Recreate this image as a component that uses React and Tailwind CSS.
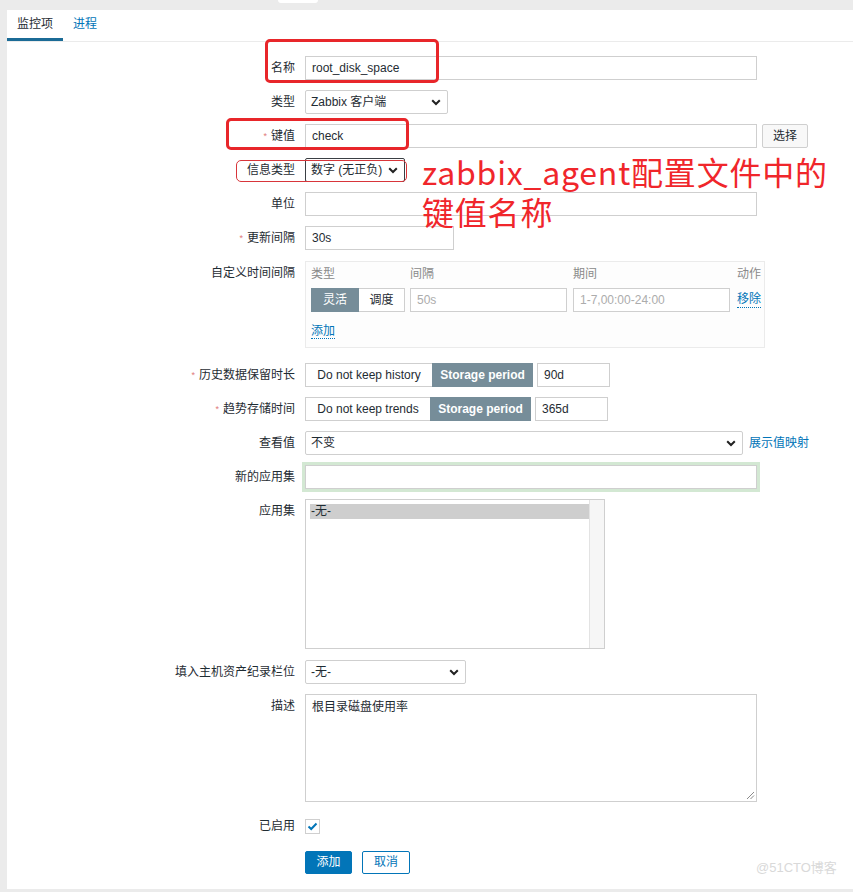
import React from 'react';

const FONT = "font-['Liberation_Sans','Noto_Sans_CJK_SC',sans-serif]";

function Chevron() {
  return (
    <svg width="10" height="7" viewBox="0 0 10 7" className="shrink-0">
      <path d="M1.2 1.2 L5 5 L8.8 1.2" fill="none" stroke="#222" strokeWidth="2" />
    </svg>
  );
}

const Label = ({ children, req }) => (
  <div className="w-[298px] shrink-0 pr-[10px] text-right leading-[24px] text-[#1f2c33]">
    {req && <span className="mr-[4px] align-top text-[9px] text-[#e07a7a]">*</span>}
    {children}
  </div>
);

const Input = ({ w, value, placeholder }) => (
  <div className={`h-[24px] whitespace-nowrap border border-[#cfcfcf] bg-white px-[6px] leading-[22px] ${w}`}>
    {value ? <span className="text-[#1f2c33]">{value}</span> : <span className="text-[#acacac]">{placeholder}</span>}
  </div>
);

const Select = ({ w, value, dark }) => (
  <div
    className={`flex h-[24px] items-center justify-between rounded-[2px] border bg-white pl-[5px] pr-[6px] ${w} ${
      dark ? 'border-[#3a3f44]' : 'border-[#cfcfcf]'
    }`}
  >
    <span className="text-[#1f2c33]">{value}</span>
    <Chevron />
  </div>
);

const Row = ({ label, req, className = '', children }) => (
  <div className={`flex items-start ${className}`}>
    <Label req={req}>{label}</Label>
    <div className="flex items-start">{children}</div>
  </div>
);

const Segmented = ({ left, right, lw, rw }) => (
  <div className="flex h-[24px] whitespace-nowrap">
    <div className={`border border-r-0 border-[#cfcfcf] bg-white text-center leading-[22px] text-[#1f2c33] ${lw}`}>{left}</div>
    <div className={`border border-[#768d99] bg-[#768d99] text-center font-bold leading-[22px] text-white ${rw}`}>{right}</div>
  </div>
);

export default function App() {
  return (
    <div className={`relative h-[892px] w-[853px] overflow-hidden bg-[#ebebeb] pl-[7px] pt-[10px] text-[12px] ${FONT}`}>
      {/* tiny tab at the very top */}
      <div className="absolute left-[278px] top-0 h-[3px] w-[40px] rounded-b-[3px] bg-white" />

      <div className="h-[879px] bg-white">
        {/* Tabs */}
        <div className="flex border-b border-[#ebebeb]">
          <div className="border-b-[3px] border-[#1b6b96] px-[10px] pt-[6px] pb-[6px] leading-[16px] text-[#1f2c33]">监控项</div>
          <div className="px-[10px] pt-[6px] leading-[16px] text-[#0275b8]">进程</div>
        </div>

        {/* Form */}
        <div className="flex flex-col gap-[10px] pt-[14px]">
          <Row label="名称">
            <Input w="w-[452px]" value="root_disk_space" />
          </Row>
          <Row label="类型">
            <Select w="w-[143px]" value="Zabbix 客户端" />
          </Row>
          <Row label="键值" req>
            <Input w="w-[452px]" value="check" />
            <div className="ml-[5px] h-[24px] w-[46px] rounded-[2px] border border-[#cfcfcf] bg-[#f8f8f8] text-center leading-[22px] text-[#1f2c33]">选择</div>
          </Row>
          <Row label="信息类型">
            <Select w="w-[100px]" value="数字 (无正负)" dark />
          </Row>
          <Row label="单位">
            <Input w="w-[452px]" value="" />
          </Row>
          <Row label="更新间隔" req>
            <Input w="w-[149px]" value="30s" />
          </Row>
          <Row label="自定义时间间隔" className="mt-[1px]">
            <div className="h-[87px] w-[460px] overflow-hidden whitespace-nowrap border border-[#ebebeb] bg-[#fdfdfd] pl-[5px] pt-[4px]">
              <div className="flex leading-[16px] text-[#8a8a8a]">
                <div className="w-[99px] shrink-0">类型</div>
                <div className="w-[163px] shrink-0">间隔</div>
                <div className="w-[164px] shrink-0">期间</div>
                <div className="shrink-0">动作</div>
              </div>
              <div className="mt-[6px] flex items-center">
                <div className="flex h-[24px] shrink-0">
                  <div className="w-[48px] border border-[#768d99] bg-[#768d99] text-center leading-[22px] text-white">灵活</div>
                  <div className="w-[46px] border border-l-0 border-[#cfcfcf] bg-white text-center leading-[22px] text-[#1f2c33]">调度</div>
                </div>
                <div className="ml-[5px] shrink-0">
                  <Input w="w-[157px]" placeholder="50s" />
                </div>
                <div className="ml-[6px] shrink-0">
                  <Input w="w-[157px]" placeholder="1-7,00:00-24:00" />
                </div>
                <span className="ml-[7px] shrink-0 border-b border-dotted border-[#0275b8] leading-[15px] text-[#0275b8]">移除</span>
              </div>
              <div className="mt-[10px]">
                <span className="border-b border-dotted border-[#0275b8] leading-[15px] text-[#0275b8]">添加</span>
              </div>
            </div>
          </Row>
          <Row label="历史数据保留时长" req className="mt-[5px]">
            <Segmented left="Do not keep history" right="Storage period" lw="w-[127px]" rw="w-[101px]" />
            <div className="ml-[4px]">
              <Input w="w-[73px]" value="90d" />
            </div>
          </Row>
          <Row label="趋势存储时间" req>
            <Segmented left="Do not keep trends" right="Storage period" lw="w-[125px]" rw="w-[101px]" />
            <div className="ml-[4px]">
              <Input w="w-[73px]" value="365d" />
            </div>
          </Row>
          <Row label="查看值">
            <Select w="w-[438px]" value="不变" />
            <span className="ml-[6px] leading-[24px] text-[#0275b8]">展示值映射</span>
          </Row>
          <Row label="新的应用集">
            <div className="shadow-[0_0_0_3px_#d3e8d3]">
              <Input w="w-[452px]" value="" />
            </div>
          </Row>
          <Row label="应用集">
            <div className="flex h-[150px] w-[300px] border border-[#cfcfcf] bg-white">
              <div className="flex-1 pl-[4px] pt-[4px]">
                <div className="h-[15px] bg-[#cecece] pl-[1px] leading-[15px] text-[#1f2c33]">-无-</div>
              </div>
              <div className="w-[15px] border-l border-[#e3e3e3] bg-[#f6f6f6]" />
            </div>
          </Row>
          <Row label="填入主机资产纪录栏位" className="mt-[1px]">
            <Select w="w-[161px]" value="-无-" />
          </Row>
          <Row label="描述">
            <div className="relative h-[108px] w-[452px] border border-[#cfcfcf] bg-white px-[6px] pt-[4px] leading-[16px] text-[#1f2c33]">
              根目录磁盘使用率
              <svg width="9" height="9" viewBox="0 0 9 9" className="absolute bottom-[1px] right-[1px]">
                <path d="M8 1 L1 8 M8 4.5 L4.5 8" stroke="#8a8a8a" strokeWidth="1" />
              </svg>
            </div>
          </Row>
          <Row label="已启用" className="mt-[2px]">
            <div className="flex h-[24px] items-center">
              <div className="flex h-[15px] w-[15px] items-center justify-center border border-[#cfcfcf] bg-white">
                <svg width="11" height="9" viewBox="0 0 11 9">
                  <path d="M1.5 4.5 L4.2 7 L9.5 1.5" fill="none" stroke="#0275b8" strokeWidth="2" />
                </svg>
              </div>
            </div>
          </Row>
          <div className="mt-[3px] flex pl-[298px]">
            <div className="h-[23px] w-[47px] rounded-[2px] border border-[#0275b8] bg-[#0275b8] text-center leading-[21px] text-white">添加</div>
            <div className="ml-[10px] h-[23px] w-[48px] rounded-[2px] border border-[#0275b8] bg-white text-center leading-[21px] text-[#0275b8]">取消</div>
          </div>
        </div>
      </div>

      {/* red annotations drawn on top */}
      <div className="pointer-events-none absolute left-[265px] top-[39px] h-[44px] w-[174px] rounded-[5px] border-[3px] border-[#e8262a]" />
      <div className="pointer-events-none absolute left-[226px] top-[118px] h-[32px] w-[183px] rounded-[5px] border-[3px] border-[#e8262a]" />
      <div className="pointer-events-none absolute left-[236px] top-[160px] h-[22px] w-[171px] rounded-[5px] border border-[#d8353a]" />
      <div className="absolute left-[422px] top-[151px] font-['Noto_Sans_CJK_SC',sans-serif] text-[32px] leading-[40px] tracking-[0.8px] text-[#f0262b]">
        <div>zabbix_agent配置文件中的</div>
        <div>键值名称</div>
      </div>

      <div className="absolute left-[756px] top-[860px] text-[13px] leading-[16px] text-[#d9d9d9]">@51CTO博客</div>
    </div>
  );
}
